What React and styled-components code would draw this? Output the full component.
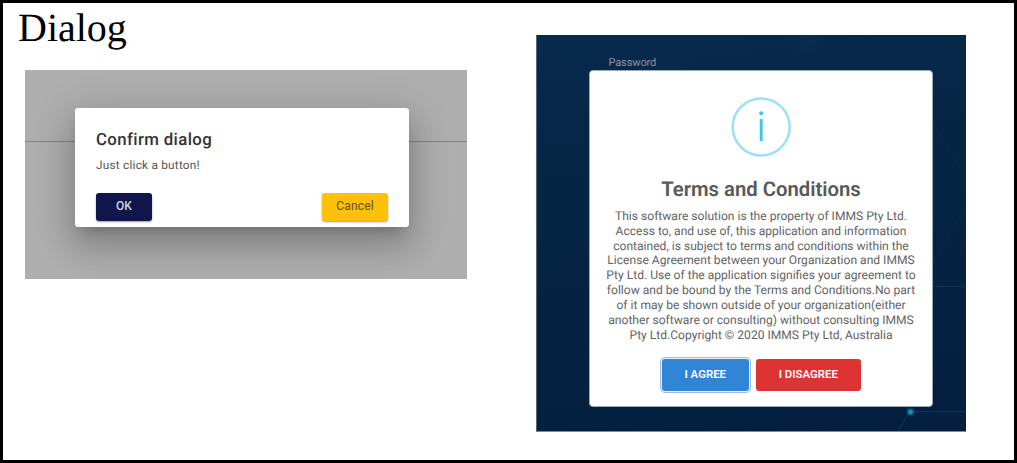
import React from "react";
import styled, { createGlobalStyle, css } from "styled-components";

const GlobalStyle = createGlobalStyle`
  * { box-sizing: border-box; }
  body { margin: 0; background: #fff; }
`;

const Frame = styled.main`
  width: 1017px;
  height: 463px;
  border: 3px solid #000;
  background: #fff;
  display: flex;
  align-items: flex-start;
  justify-content: space-between;
  padding-right: 48px;
  overflow: hidden;
  font-family: Roboto, "Liberation Sans", sans-serif;
  text-rendering: geometricPrecision;
`;

const Column = styled.section`
  display: flex;
  flex-direction: column;
  padding-left: 15px;
`;

const PageTitle = styled.h1`
  margin: 0;
  height: 67px;
  padding-top: 2px;
  font: 400 40px/46px "Liberation Serif", serif;
  color: #000;
`;

const GreyBackdrop = styled.div`
  width: 442px;
  height: 209px;
  margin-left: 7px;
  padding: 38px 0 0 50px;
  overflow: hidden;
  background: linear-gradient(#aeaeae 71px, #858585 71px, #858585 72px, #a6a6a6 72px, #aeaeae 73px);
`;

const ConfirmCard = styled.div`
  width: 334px;
  height: 119px;
  padding: 22px 21px 0;
  border-radius: 3px;
  background: #fff;
  display: flex;
  flex-direction: column;
  box-shadow: 0 9px 12px -6px rgba(0, 0, 0, 0.2), 0 20px 32px 3px rgba(0, 0, 0, 0.14),
    0 8px 39px 7px rgba(0, 0, 0, 0.12);
`;

const ConfirmTitle = styled.h2`
  margin: 0;
  font-size: 16.8px;
  line-height: 21px;
  font-weight: 500;
  letter-spacing: 0.38px;
  color: #333;
`;

const ConfirmText = styled.p`
  margin: 6px 0 18.5px;
  font-size: 11.8px;
  line-height: 17px;
  letter-spacing: 0.23px;
  color: #555;
`;

const ConfirmActions = styled.div`
  display: flex;
  justify-content: space-between;
`;

const MaterialButton = styled.button`
  height: 28px;
  width: ${(p) => p.$width}px;
  padding: 0 0 1px;
  border: 0;
  border-radius: 3px;
  font: ${(p) => p.$weight} 12px/27px Roboto, sans-serif;
  letter-spacing: 0.15px;
  color: ${(p) => p.$color};
  background: ${(p) => p.$bg};
  box-shadow: 0 1px 2px rgba(0, 0, 0, 0.4);
`;

const NavyBackdrop = styled.div`
  position: relative;
  width: 430px;
  height: 397px;
  margin-top: 32px;
  padding: 20px 33px 24px 53px;
  border-left: 1px solid #526a7f;
  border-bottom: 1px solid #7c8c9b;
  background: radial-gradient(circle at 270px 0, #0a2d50 0, transparent 20px),
    linear-gradient(172deg, #082a4d 0%, #062443 42%, #031f3d 100%);
`;

const Network = styled.svg`
  position: absolute;
  inset: 0;
`;

const FieldLabel = styled.div`
  position: relative;
  margin-left: 18.5px;
  height: 15px;
  font-size: 11px;
  letter-spacing: -0.12px;
  line-height: 15px;
  color: #8c959d;
`;

const TermsCard = styled.div`
  position: relative;
  width: 344px;
  height: 337px;
  margin-left: -1px;
  padding-top: 26px;
  border: 1px solid #9caab6;
  border-radius: 4px;
  background: #fff;
  display: flex;
  flex-direction: column;
  align-items: center;
`;

const TermsTitle = styled.h2`
  margin: 19px 0 0;
  font-size: 20.3px;
  line-height: 26px;
  font-weight: 600;
  color: #595959;
  white-space: nowrap;
`;

const TermsText = styled.p`
  margin: 7px 0 0;
  font-size: 12.08px;
  line-height: 14.83px;
  color: #636363;
  text-align: center;
  white-space: pre;
`;

const TermsActions = styled.div`
  display: flex;
  gap: 7px;
  margin-top: 16.5px;
`;

const AlertButton = styled.button`
  height: 32px;
  width: ${(p) => p.$width}px;
  padding: 0 0 2px;
  border: 0;
  border-radius: 3px;
  font: 600 11.4px/30px Roboto, sans-serif;
  color: #fff;
  background: ${(p) => p.$bg};
  ${(p) =>
    p.$focused &&
    css`
      box-shadow: 0 0 0 1px #eaf2fa, 0 0 0 2px #9fbddb;
    `}
`;

const TERMS = [
  "This software solution is the property of IMMS Pty Ltd.",
  "Access to, and use of, this application and information",
  "contained, is subject to terms and conditions within the",
  "License Agreement between your Organization and IMMS",
  "Pty Ltd. Use of the application signifies your agreement to",
  "follow and be bound by the Terms and Conditions.No part",
  "of it may be shown outside of your organization(either",
  "another software or consulting) without consulting IMMS",
  "Pty Ltd.Copyright © 2020 IMMS Pty Ltd, Australia",
].join("\n");

function InfoIcon() {
  return (
    <svg width="60" height="60" viewBox="0 0 60 60" fill="none">
      <circle cx="30.2" cy="30" r="28.5" stroke="#9de0f6" strokeWidth="2.5" />
      <circle cx="30.2" cy="16.3" r="2" fill="#3fc3ee" />
      <path d="M30.2 22v22" stroke="#3fc3ee" strokeWidth="2.9" />
    </svg>
  );
}

function ConfirmDialog() {
  return (
    <GreyBackdrop>
      <ConfirmCard>
        <ConfirmTitle>Confirm dialog</ConfirmTitle>
        <ConfirmText>Just click a button!</ConfirmText>
        <ConfirmActions>
          <MaterialButton $width={56} $weight={500} $bg="#10164b" $color="#d3d4de">OK</MaterialButton>
          <MaterialButton $width={66} $weight={400} $bg="#ffc107" $color="#604b10">Cancel</MaterialButton>
        </ConfirmActions>
      </ConfirmCard>
    </GreyBackdrop>
  );
}

function TermsDialog() {
  return (
    <NavyBackdrop>
      <Network width="429" height="396" viewBox="0 0 429 396" fill="none">
        <defs>
          <radialGradient id="node">
            <stop offset="0" stopColor="#27b3b5" />
            <stop offset="0.35" stopColor="#1480a5" />
            <stop offset="1" stopColor="#075083" stopOpacity="0" />
          </radialGradient>
        </defs>
        <path d="M395 251.5H429" stroke="#07316b" />
        <path d="M396 88l31 52M396 228l33-57" stroke="#0a2f57" strokeWidth="0.6" />
        <path d="M361 396l12-20M373 376.5H429M373 376l-6-12" stroke="#073568" />
        <circle cx="373.5" cy="377" r="5" fill="url(#node)" />
      </Network>
      <FieldLabel>Password</FieldLabel>
      <TermsCard>
        <InfoIcon />
        <TermsTitle>Terms and Conditions</TermsTitle>
        <TermsText>{TERMS}</TermsText>
        <TermsActions>
          <AlertButton $width={87.5} $bg="#3085d6" $focused>I AGREE</AlertButton>
          <AlertButton $width={104.5} $bg="#dd3333">I DISAGREE</AlertButton>
        </TermsActions>
      </TermsCard>
    </NavyBackdrop>
  );
}

export default function App() {
  return (
    <>
      <GlobalStyle />
      <Frame>
        <Column>
          <PageTitle>Dialog</PageTitle>
          <ConfirmDialog />
        </Column>
        <TermsDialog />
      </Frame>
    </>
  );
}
